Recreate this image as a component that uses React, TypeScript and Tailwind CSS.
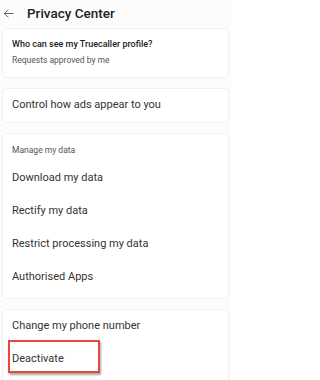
import React from "react";

const Row = ({ label, children }: { label: string; children?: React.ReactNode }) => (
  <div className="relative flex h-[33px] items-center px-[9px] text-[11px] text-[#333]">
    {label}
    {children}
  </div>
);

const Card = ({ children, className = "" }: { children: React.ReactNode; className?: string }) => (
  <div className={`mx-[2px] rounded-[5px] border border-[#efefef] bg-white ${className}`}>{children}</div>
);

export default function App() {
  return (
    <div className="h-[380px] w-[231px] overflow-hidden bg-[#fcfcfc] font-['Roboto',sans-serif]">
      <div className="flex h-[26px] items-center">
        <svg className="ml-[3px] h-[11px] w-[11px]" viewBox="0 0 12 12" fill="none" stroke="#555" strokeWidth="1" strokeLinecap="round" strokeLinejoin="round">
          <path d="M11 6H1.5M5.5 2 1.5 6l4 4" />
        </svg>
        <span className="ml-[13px] text-[13.5px] font-medium text-[#222]">Privacy Center</span>
      </div>

      <div className="mt-[2px] flex flex-col gap-[10px]">
        <Card className="h-[50px] px-[9px] pt-[8px]">
          <div className="text-[9px] font-medium leading-[14px] text-[#222]">Who can see my Truecaller profile?</div>
          <div className="mt-[3px] text-[8.5px] leading-[12px] text-[#555]">Requests approved by me</div>
        </Card>

        <Card>
          <Row label="Control how ads appear to you" />
        </Card>

        <Card className="pb-[4px]">
          <div className="flex h-[28px] items-end px-[9px] pb-[5px] text-[8.5px] text-[#555]">Manage my data</div>
          <Row label="Download my data" />
          <Row label="Rectify my data" />
          <Row label="Restrict processing my data" />
          <Row label="Authorised Apps" />
        </Card>

        <Card className="h-[80px]">
          <Row label="Change my phone number" />
          <Row label="Deactivate">
            <div className="absolute left-[5px] top-[-3px] h-[33px] w-[92px] border-2 border-[#e8473a] shadow-[1px_2px_2px_rgba(0,0,0,0.35)]" />
          </Row>
        </Card>
      </div>
    </div>
  );
}
